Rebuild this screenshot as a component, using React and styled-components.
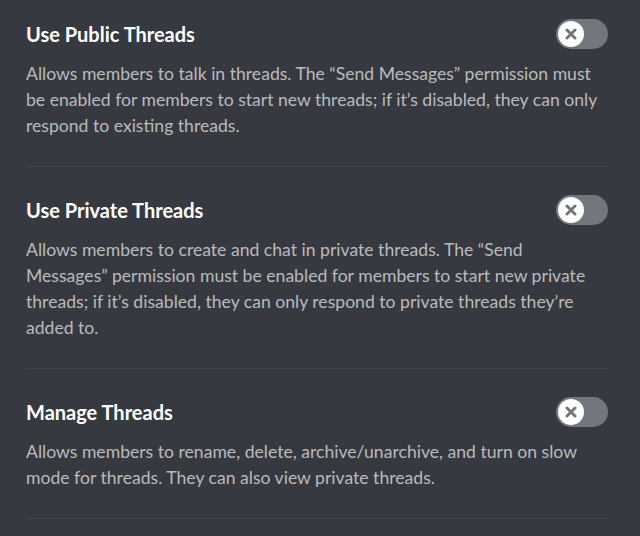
import React from 'react'
import styled, { createGlobalStyle } from 'styled-components'

const GlobalStyle = createGlobalStyle`
  html, body {
    margin: 0;
    background-color: #36393f;
  }
  body {
    font-family: Lato, "Noto Sans", sans-serif;
    -webkit-font-smoothing: antialiased;
  }
`;

const Page = styled.div`
  width: 640px;
  height: 536px;
  overflow: hidden;
  background-color: #36393f;
  padding: 19px 32px 0 26px;
  box-sizing: border-box;
`;

const Section = styled.div`
  display: flex;
  flex-direction: column;
  padding: 28px 0 27px;
  border-bottom: 1px solid #42454a;
  &:first-child {
    padding-top: 0;
  }
`;

const Header = styled.div`
  display: flex;
  flex-direction: row;
  align-items: center;
  justify-content: space-between;
  height: 30px;
`;

const Title = styled.div`
  color: #ffffff;
  font-size: 20px;
  font-weight: 700;
`;

const Description = styled.div`
  margin-top: 12px;
  color: #b9bbbe;
  font-size: 17.6px;
  line-height: 26px;
`;

const Track = styled.div`
  width: 52px;
  height: 30px;
  border-radius: 15px;
  background-color: #72767d;
  display: flex;
  align-items: center;
  padding-left: 2px;
  box-sizing: border-box;
`;

const Knob = styled.div`
  width: 26px;
  height: 26px;
  border-radius: 50%;
  background-color: #ffffff;
  display: flex;
  align-items: center;
  justify-content: center;
`;

const Toggle = () => (
  <Track>
    <Knob>
      <svg width="12" height="12" viewBox="0 0 12 12">
        <path d="M2 2 L10 10 M10 2 L2 10" stroke="#72767d" strokeWidth="3" strokeLinecap="round" />
      </svg>
    </Knob>
  </Track>
);

const permissions = [
  {
    name: "Use Public Threads",
    text: "Allows members to talk in threads. The \u201cSend Messages\u201d permission must be enabled for members to start new threads; if it\u2019s disabled, they can only respond to existing threads."
  },
  {
    name: "Use Private Threads",
    text: "Allows members to create and chat in private threads. The \u201cSend Messages\u201d permission must be enabled for members to start new private threads; if it\u2019s disabled, they can only respond to private threads they\u2019re added to."
  },
  {
    name: "Manage Threads",
    text: "Allows members to rename, delete, archive/unarchive, and turn on slow mode for threads. They can also view private threads."
  }
];

const App = () => {
  return (
    <>
      <GlobalStyle />
      <Page>
        {permissions.map((item) => (
          <Section key={item.name}>
            <Header>
              <Title>{item.name}</Title>
              <Toggle />
            </Header>
            <Description>{item.text}</Description>
          </Section>
        ))}
      </Page>
    </>
  )
}

export default App
